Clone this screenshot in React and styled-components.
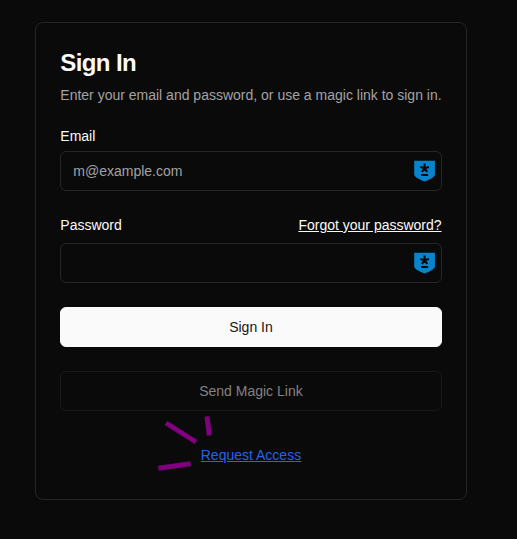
import React from "react";
import styled, { createGlobalStyle } from "styled-components";

const Global = createGlobalStyle`
  * { box-sizing: border-box; }
  body { margin: 0; background: #0a0a0a; }
`;
const Page = styled.main`
  height: 539px;
  padding: 22px 50px 39px 35.3px;
  background: #0a0a0a;
  color: #fafafa;
  font: 14px/20px "Liberation Sans", Arial, sans-serif;
`;
const Card = styled.section`
  width: 431.3px;
  height: 478px;
  padding: 24px;
  border: 1px solid #262626;
  border-radius: 8px;
`;
const Title = styled.h1`
  margin: 0;
  font-size: 24px;
  line-height: 32px;
  font-weight: 700;
  letter-spacing: -0.6px;
`;
const Description = styled.p`
  margin: 6px 0 0;
  color: #a3a3a3;
  white-space: nowrap;
`;
const Form = styled.form`
  display: grid;
  gap: 24px;
  margin-top: 24px;
`;
const Field = styled.div`
  display: grid;
  gap: 8px;
`;
const LabelRow = styled.div`
  display: flex;
  justify-content: space-between;
  height: ${(p) => p.$height}px;
  line-height: ${(p) => p.$height}px;
`;
const Forgot = styled.a`
  text-decoration: underline;
`;
const InputBox = styled.div`
  display: flex;
  align-items: center;
  height: 40px;
  padding: 0 5px 0 12px;
  border: 1px solid #262626;
  border-radius: 6px;
`;
const Input = styled.input`
  flex: 1;
  min-width: 0;
  padding: 0;
  border: 0;
  outline: 0;
  background: transparent;
  color: #fafafa;
  font: inherit;
  &::placeholder { color: #a3a3a3; opacity: 1; }
`;
const Button = styled.button`
  height: 40px;
  padding: 0;
  border: 1px solid ${(p) => (p.$outline ? "#181818" : "#fafafa")};
  border-radius: 6px;
  background: ${(p) => (p.$outline ? "transparent" : "#fafafa")};
  color: ${(p) => (p.$outline ? "#828282" : "#171717")};
  font: inherit;
`;
const Footer = styled.div`
  position: relative;
  margin-top: 34px;
  text-align: center;
`;
const RequestLink = styled.a`
  color: #2563eb;
  text-decoration: underline;
`;
const Sparks = styled.svg`
  position: absolute;
  left: 90px;
  top: -35px;
`;

const Shield = () => (
  <svg width="22" height="22" viewBox="0 0 22 22">
    <path d="M.2.8H20.9V14.2C20.9 16.7 17.8 18.4 10.6 21.5C3.3 18.4 .2 16.7 .2 14.2Z" fill="#0585cd" />
    <path d="M10.6 8.3V3.6M10.6 8.3L6.3 6.9M10.6 8.3L14.9 6.9M10.6 8.3L7.9 12M10.6 8.3L13.3 12M7.1 15H14.1" fill="none" stroke="#0a0a0a" strokeWidth="2.1" />
  </svg>
);

export default function App() {
  return (
    <Page>
      <Global />
      <Card>
        <Title>Sign In</Title>
        <Description>Enter your email and password, or use a magic link to sign in.</Description>
        <Form>
          <Field>
            <LabelRow $height={14}><label htmlFor="email">Email</label></LabelRow>
            <InputBox><Input id="email" placeholder="m@example.com" /><Shield /></InputBox>
          </Field>
          <Field>
            <LabelRow $height={20}><label htmlFor="password">Password</label><Forgot>Forgot your password?</Forgot></LabelRow>
            <InputBox><Input id="password" type="password" /><Shield /></InputBox>
          </Field>
          <Button type="button">Sign In</Button>
          <Button type="button" $outline>Send Magic Link</Button>
        </Form>
        <Footer>
          <Sparks width="70" height="65" viewBox="150 410 70 65">
            <path d="M166 423L196 442M207 416.5L209.3 435.5M158.4 468.3L190.5 463.8" stroke="#800080" strokeWidth="5" />
          </Sparks>
          <RequestLink>Request Access</RequestLink>
        </Footer>
      </Card>
    </Page>
  );
}
